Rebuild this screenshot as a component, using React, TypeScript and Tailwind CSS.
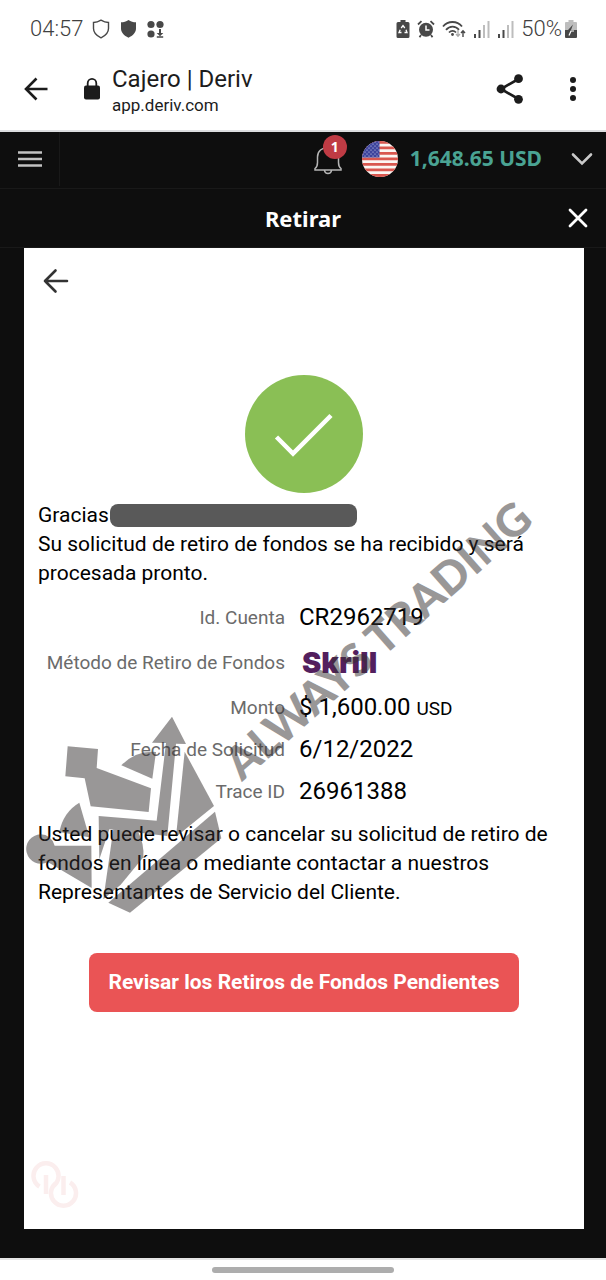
const details = [
  { label: 'Id. Cuenta', value: 'CR2962719' },
  { label: 'Método de Retiro de Fondos', value: 'Skrill' },
  { label: 'Monto', value: '$ 1,600.00', unit: 'USD' },
  { label: 'Fecha de Solicitud', value: '6/12/2022' },
  { label: 'Trace ID', value: '26961388' },
]

function SignalIcon() {
  return (
    <svg width="17" height="18" viewBox="0 0 17 18" aria-hidden="true">
      <path d="M1 14h2v4H1zM5.500 10h2v8h-2z" fill="#484848" />
      <path d="M10 5h2v13h-2zM14.500 1h2v17h-2z" fill="#bdbdbd" />
    </svg>
  )
}

function StatusBar() {
  return (
    <div className="flex h-14 items-center justify-between pl-[30px] pr-[29px] pt-px text-[22px] font-light text-[#404040]">
      <div className="flex items-center gap-[9px]">
        <span>04:57</span>
        <svg width="18" height="20" viewBox="0 0 18 20" fill="none" stroke="#484848" strokeWidth="1.4" aria-hidden="true">
          <path d="M9 1.200c2.600 1.600 5 2.300 7.500 2.300v6c0 4.200-3 7.200-7.500 9.300-4.500-2.100-7.500-5.100-7.500-9.300v-6C4 3.500 6.400 2.800 9 1.200z" />
        </svg>
        <svg width="18" height="20" viewBox="0 0 18 20" fill="#484848" aria-hidden="true">
          <path d="M9.500 1c2.300 1.600 4.800 2.300 7.500 2.300v6.200c0 4-3 7-7.500 9.200C5 16.500 2 13.500 2 9.500V3.300C4.700 3.300 7.200 2.600 9.500 1z" />
        </svg>
        <svg width="19" height="20" viewBox="0 0 19 20" fill="#484848" aria-hidden="true">
          <circle cx="5" cy="5.500" r="3.600" />
          <circle cx="14" cy="5.500" r="3.600" />
          <circle cx="5" cy="15" r="3.600" />
          <path d="M13 10h2v4h2.300l-3.300 3.200-3.300-3.200H13zM10.800 17.200h6.400v1.600h-6.400z" />
        </svg>
      </div>
      <div className="flex items-center gap-[7px]">
        <svg width="14" height="18" viewBox="0 0 14 18" aria-hidden="true">
          <path d="M4.500 0h5v2H12a1.500 1.500 0 0 1 1.500 1.500v13A1.500 1.500 0 0 1 12 18H2a1.500 1.500 0 0 1-1.500-1.500v-13A1.500 1.500 0 0 1 2 2h2.500z" fill="#484848" />
          <path d="M5.200 8 7 5.500 8.800 8M10 9.800l1 2.700H8.500M5.500 12.500H3L4.200 9.800" fill="none" stroke="#fff" strokeWidth="1.300" />
        </svg>
        <svg width="18" height="18" viewBox="0 0 18 18" aria-hidden="true">
          <circle cx="9" cy="9.800" r="7" fill="#484848" />
          <path d="M1 4.500 4.500 1.200M17 4.500l-3.500-3.300M4 15l-1.500 2.200M14 15l1.500 2.200" stroke="#484848" strokeWidth="1.800" />
          <path d="M9 5.500V10h3.500" fill="none" stroke="#fff" strokeWidth="1.500" />
        </svg>
        <svg width="24" height="18" viewBox="0 0 24 18" fill="none" aria-hidden="true">
          <path d="M1 6.500C6 .5 15 .5 20 6.500M4 9.800c3.700-4.300 9.500-4.300 13 0M7 12.500c2.200-2.300 5-2.300 7 0" stroke="#484848" strokeWidth="1.800" />
          <circle cx="10.500" cy="14.500" r="1.400" fill="#484848" />
          <path d="M16 10v6m-2-2 2 2.300 2-2.300" stroke="#aaa" strokeWidth="1.300" />
          <path d="M21 17v-6m-2 2 2-2.300 2 2.300" stroke="#484848" strokeWidth="1.400" />
        </svg>
        <SignalIcon />
        <SignalIcon />
        <div className="flex items-center gap-[3px]">
          <span>50%</span>
          <svg width="12" height="18" viewBox="0 0 12 18" aria-hidden="true">
            <path d="M3.500 0h5v2H11a1 1 0 0 1 1 1v7H0V3a1 1 0 0 1 1-1h2.500z" fill="#bdbdbd" />
            <path d="M0 10h12v7a1 1 0 0 1-1 1H1a1 1 0 0 1-1-1z" fill="#484848" />
            <path d="M8 4.500 3 10h3z" fill="#484848" />
            <path d="M4 15.500 6 11h3" fill="none" stroke="#fff" strokeWidth="1.200" />
          </svg>
        </div>
      </div>
    </div>
  )
}

function BrowserBar() {
  return (
    <div className="flex h-[76px] items-center border-b-2 border-[#dcdddf] pb-2 pl-6 pr-5 text-[#1c1c1c]">
      <button type="button" aria-label="Atrás">
        <svg width="24" height="24" viewBox="0 0 24 24" fill="none" stroke="currentColor" strokeWidth="2.600">
          <path d="M23.500 12H2M12.500 1.500 2 12l10.500 10.500" />
        </svg>
      </button>
      <svg className="ml-9" width="16" height="22" viewBox="0 0 16 22" aria-hidden="true">
        <rect y="7.500" width="16" height="14" rx="2" fill="currentColor" />
        <path d="M3.700 9V5.200a4.300 4.300 0 0 1 8.600 0V9" fill="none" stroke="currentColor" strokeWidth="1.800" />
      </svg>
      <div className="ml-3 flex-1 pt-1">
        <p className="text-2xl leading-7">Cajero | Deriv</p>
        <p className="text-[17px] leading-6">app.deriv.com</p>
      </div>
      <button type="button" aria-label="Compartir">
        <svg width="28" height="30" viewBox="0 0 28 30" fill="currentColor">
          <path d="M22.500 5 5 15l17.500 10" fill="none" stroke="currentColor" strokeWidth="2.600" />
          <circle cx="22.500" cy="4.700" r="4.400" />
          <circle cx="5" cy="15" r="4.400" />
          <circle cx="22.500" cy="25.300" r="4.400" />
        </svg>
      </button>
      <button type="button" aria-label="Más opciones" className="ml-9">
        <svg width="26" height="26" viewBox="0 0 26 26" fill="currentColor">
          <circle cx="13" cy="4" r="3" />
          <circle cx="13" cy="13" r="3" />
          <circle cx="13" cy="22" r="3" />
        </svg>
      </button>
    </div>
  )
}

function Flag() {
  return (
    <svg width="36" height="36" viewBox="0 0 36 36" aria-hidden="true">
      <defs>
        <clipPath id="flag">
          <circle cx="18" cy="18" r="18" />
        </clipPath>
        <pattern id="stars" width="4" height="4" patternUnits="userSpaceOnUse">
          <circle cx="1" cy="1" r="0.500" fill="#fff" />
          <circle cx="3" cy="3" r="0.500" fill="#fff" />
        </pattern>
      </defs>
      <g clipPath="url(#flag)">
        <path d="M0 0h36v36H0z" fill="#fbf6f3" />
        <path d="M0 1.400h36M0 6.900h36M0 12.400h36M0 17.900h36M0 23.400h36M0 28.900h36M0 34.500h36" stroke="#d9574f" strokeWidth="2.800" />
        <path d="M0 0h17.500v16.500H0z" fill="#3d449c" />
        <path d="M0 0h17.500v16.500H0z" fill="url(#stars)" />
      </g>
    </svg>
  )
}

function AccountHeader() {
  return (
    <header className="flex h-[57px] items-center border-b border-[#191919] pb-[2px] pr-3 font-['Noto_Sans',sans-serif]">
      <button type="button" aria-label="Menú" className="flex h-full w-[60px] items-center justify-center border-r border-[#191919]">
        <svg width="24" height="16" viewBox="0 0 24 16" stroke="#c2c2c2" strokeWidth="2.600">
          <path d="M0 1.500h24M0 8h24M0 14.500h24" />
        </svg>
      </button>
      <div className="ml-auto flex items-center">
        <button type="button" aria-label="Notificaciones" className="relative mr-5">
          <svg width="28" height="32" viewBox="0 0 28 32" fill="none" stroke="#b5b5b5" strokeWidth="1.500">
            <path d="M1 27v-1.500c2-1.500 2.500-3 2.500-6V14C3.500 8 8 4.500 14 4.500S24.500 8 24.500 14v5.500c0 3 .5 4.500 2.500 6V27zM10.500 27.500c.5 4 6.500 4 7 0" />
          </svg>
          <span className="absolute -top-2 left-[9px] flex h-6 w-6 items-center justify-center rounded-full bg-[#bf3b44] text-sm font-bold text-white">1</span>
        </button>
        <Flag />
        <span className="ml-3 text-[21px] font-bold text-[#4aa393]">1,648.65 USD</span>
        <button type="button" aria-label="Cambiar de cuenta" className="ml-7">
          <svg width="24" height="24" viewBox="0 0 24 24" fill="none" stroke="#c9c9c9" strokeWidth="2.600" strokeLinecap="round">
            <path d="m3 7.500 9 9 9-9" />
          </svg>
        </button>
      </div>
    </header>
  )
}

function Watermark() {
  return (
    <svg
      className="pointer-events-none absolute left-0 top-[242px] h-[430px] w-[520px]"
      viewBox="24 490 520 430"
      fill="#363132"
      opacity="0.500"
      overflow="visible"
    >
      <g transform="translate(20 700) scale(0.33333)">
        <path d="m143 139 91 8-4 57 163 61-7 71-174-17-18-84-58-6z" />
        <path d="M304 196q46-46 104-40l-11 80z" />
        <path d="m456 50 42 82-30-1-26 277-174-20-30 90-2-130 174 14 28-233-42-1z" />
        <path d="m494 155 88 163-114 92z" />
        <path d="m585 335 19 80-274 223-65-30z" />
        <path d="m280 388 75 9q18 35 15 75l-68 82-52 44z" />
        <path d="M62 403a44 44 0 0 1 42 34h110l1 127-132-78a44 44 0 1 1-21-83z" />
        <path d="M178 308q-48 28-60 88l90 16z" />
      </g>
      <text transform="translate(242 782) rotate(-41.500)" fontFamily="Lato, sans-serif" fontSize="45" fontWeight="900">
        ALWAYS TRADING
      </text>
    </svg>
  )
}

export default function App() {
  return (
    <div className="flex min-h-screen flex-col bg-white font-[Roboto,sans-serif]">
      <StatusBar />
      <BrowserBar />
      <main className="flex flex-1 flex-col bg-[#0e0e0e]">
        <AccountHeader />
        <div className="relative flex h-[59px] items-center justify-center border-b border-[#191919]">
          <h1 className="font-['Noto_Sans',sans-serif] text-[22px] font-bold text-white">Retirar</h1>
          <button type="button" aria-label="Cerrar" className="absolute right-[18px]">
            <svg width="20" height="20" viewBox="0 0 20 20" stroke="#fff" strokeWidth="2.800" strokeLinecap="round">
              <path d="m2 2 16 16M18 2 2 18" />
            </svg>
          </button>
        </div>

        <section className="relative ml-6 mr-[22px] mb-[29px] flex flex-1 flex-col bg-white px-[14px] text-[21px] leading-[29px] text-black">
          <button type="button" aria-label="Volver" className="ml-[5px] mt-5 w-6">
            <svg width="26" height="26" viewBox="0 0 26 26" fill="none" stroke="#333" strokeWidth="2.600" strokeLinecap="round" strokeLinejoin="round">
              <path d="M24 13H2M12.500 2.500 2 13l10.500 10.500" />
            </svg>
          </button>

          <svg className="mx-auto mt-[81px] mb-2" width="118" height="118" viewBox="0 0 118 118" aria-hidden="true">
            <circle cx="59" cy="59" r="59" fill="#8abf55" />
            <path d="m31.500 62 16.500 16.500 38-38" fill="none" stroke="#fff" strokeWidth="4.500" />
          </svg>

          <p className="flex items-center gap-px">
            Gracias
            <span className="h-[23px] w-[247px] rounded-lg bg-[#595959]" />
          </p>
          <p>Su solicitud de retiro de fondos se ha recibido y será procesada pronto.</p>

          <dl className="my-2">
            {details.map((d) => (
              <div
                key={d.label}
                className={`grid grid-cols-[247px_1fr] items-center gap-[14px] ${d.value === 'Skrill' ? 'h-12' : 'h-[42px]'}`}
              >
                <dt className="whitespace-nowrap text-right text-[19px] text-[#6b6b6b]">{d.label}</dt>
                {d.value === 'Skrill' ? (
                  <dd className="pl-[3px] font-[Inter,sans-serif] text-[29px] font-black text-[#531f5e]">Skrill</dd>
                ) : (
                  <dd className="text-2xl">
                    {d.value} {d.unit && <span className="text-[19px]">{d.unit}</span>}
                  </dd>
                )}
              </div>
            ))}
          </dl>

          <p>
            Usted puede revisar o cancelar su solicitud de retiro de fondos en línea o mediante contactar a nuestros
            Representantes de Servicio del Cliente.
          </p>

          <button type="button" className="mx-auto mt-[46px] h-[59px] w-[430px] max-w-full rounded-lg bg-[#ea5455] text-[21px] font-bold text-white">
            Revisar los Retiros de Fondos Pendientes
          </button>

          <svg className="-ml-[7px] mt-auto mb-5" width="48" height="48" viewBox="0 0 48 48" fill="none" stroke="#fbeeee" strokeWidth="4.500" aria-hidden="true">
            <path d="M8.500 25.500a12.500 12.500 0 1 1 13 0M15 14v19M26 21.500a12.500 12.500 0 1 0 13 0M32.500 15v19" />
          </svg>

          <Watermark />
        </section>
      </main>
      <div className="flex h-[22px] items-center justify-center border-t-2 border-[#e5e5e5]">
        <div className="h-[6px] w-[182px] rounded-full bg-[#adadad]" />
      </div>
    </div>
  )
}
